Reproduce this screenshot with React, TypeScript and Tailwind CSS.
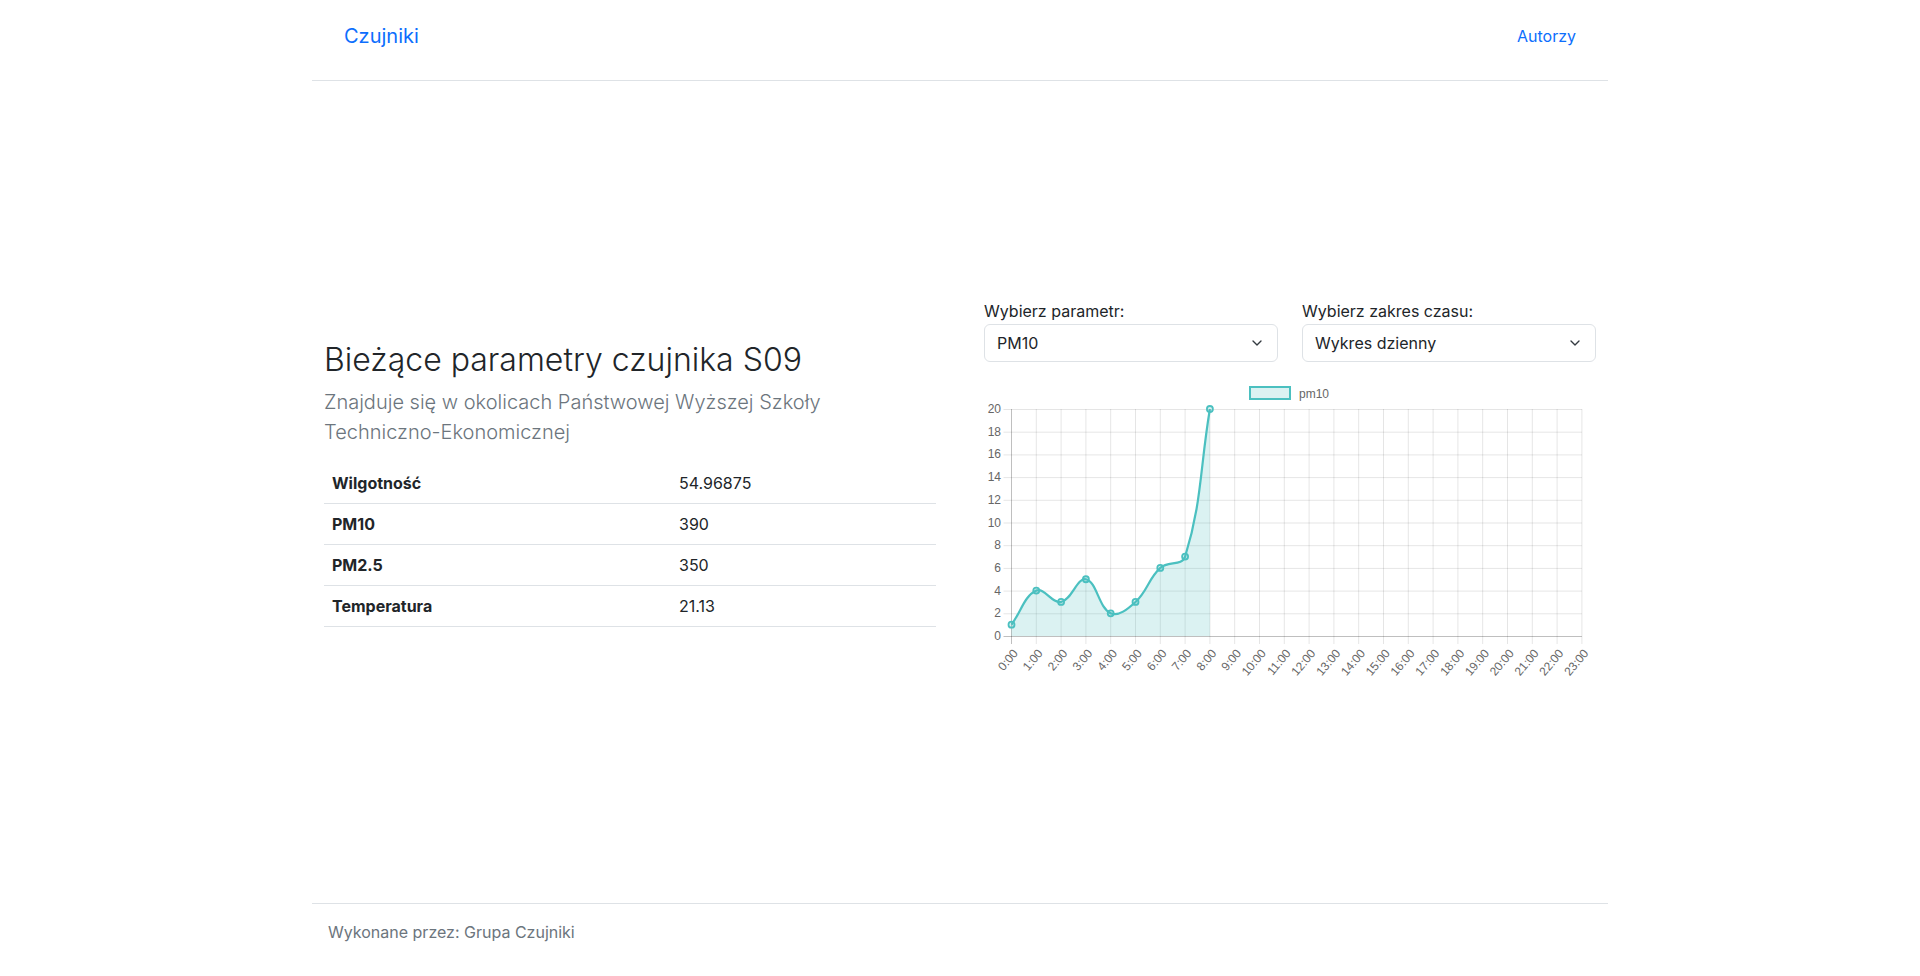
import { ChevronDown } from "lucide-react";

type Pt = { x: number; y: number };

const data = [1, 4, 3, 5, 2, 3, 6, 7, 20];
const hours = Array.from({ length: 24 }, (_, i) => `${i}:00`);

// chart geometry (px inside the svg)
const X0 = 27.5;
const STEP = 24.8;
const Y_TOP = 33;
const Y_BOT = 260;
const yv = (v: number) => Y_BOT - (v * (Y_BOT - Y_TOP)) / 20;
const xv = (i: number) => X0 + i * STEP;

// same control points as chart.js line tension 0.4
function splinePath(pts: Pt[], t = 0.4) {
  const cps = pts.map((cur, i) => {
    const prev = pts[i - 1] ?? cur;
    const next = pts[i + 1] ?? cur;
    const d01 = Math.hypot(cur.x - prev.x, cur.y - prev.y);
    const d12 = Math.hypot(next.x - cur.x, next.y - cur.y);
    let s01 = d01 / (d01 + d12);
    let s12 = d12 / (d01 + d12);
    if (isNaN(s01)) s01 = 0;
    if (isNaN(s12)) s12 = 0;
    const fa = t * s01;
    const fb = t * s12;
    return {
      prev: { x: cur.x - fa * (next.x - prev.x), y: cur.y - fa * (next.y - prev.y) },
      next: { x: cur.x + fb * (next.x - prev.x), y: cur.y + fb * (next.y - prev.y) },
    };
  });
  let d = `M${pts[0].x},${pts[0].y}`;
  for (let i = 1; i < pts.length; i++) {
    const a = cps[i - 1].next;
    const b = cps[i].prev;
    d += ` C${a.x},${a.y} ${b.x},${b.y} ${pts[i].x},${pts[i].y}`;
  }
  return d;
}

function Chart() {
  const pts = data.map((v, i) => ({ x: xv(i), y: yv(v) }));
  const line = splinePath(pts);
  const area = `${line} L${pts[pts.length - 1].x},${Y_BOT} L${pts[0].x},${Y_BOT} Z`;
  const xEnd = xv(23);

  return (
    <svg width={612} height={309} className="block overflow-visible font-['Liberation_Sans',Arial,sans-serif]">
      {/* legend */}
      <rect x={266} y={11} width={40} height={12} fill="rgba(75,192,192,0.2)" stroke="rgb(75,192,192)" strokeWidth={2} />
      <text x={315} y={17.5} fontSize={12} fill="#666" dominantBaseline="central">
        pm10
      </text>

      {/* horizontal grid + y ticks */}
      {Array.from({ length: 11 }, (_, k) => k * 2).map((v) => (
        <g key={v}>
          <line
            x1={X0 - 8}
            x2={xEnd}
            y1={yv(v) + 0.5}
            y2={yv(v) + 0.5}
            stroke={v === 0 ? "rgba(0,0,0,0.25)" : "rgba(0,0,0,0.1)"}
            strokeWidth={1}
          />
          <text x={17} y={yv(v)} fontSize={12} fill="#666" textAnchor="end" dominantBaseline="central">
            {v}
          </text>
        </g>
      ))}

      {/* vertical grid + x ticks */}
      {hours.map((h, i) => (
        <g key={h}>
          <line
            x1={xv(i)}
            x2={xv(i)}
            y1={Y_TOP}
            y2={Y_BOT + 8}
            stroke={i === 0 ? "rgba(0,0,0,0.25)" : "rgba(0,0,0,0.1)"}
            strokeWidth={1}
          />
          <text
            transform={`translate(${xv(i) + 4},${Y_BOT + 15}) rotate(-50)`}
            fontSize={12}
            fill="#666"
            textAnchor="end"
            dominantBaseline="central"
          >
            {h}
          </text>
        </g>
      ))}

      {/* data */}
      <path d={area} fill="rgba(75,192,192,0.2)" />
      <path d={line} fill="none" stroke="rgb(75,192,192)" strokeWidth={2.2} />
      {pts.map((p, i) => (
        <circle key={i} cx={p.x} cy={p.y} r={3} fill="rgba(75,192,192,0.2)" stroke="rgb(75,192,192)" strokeWidth={1.8} />
      ))}
    </svg>
  );
}

function Select({ label, value }: { label: string; value: string }) {
  return (
    <div>
      <div className="text-base leading-6">{label}</div>
      <div className="mt-px h-[38px] border border-[#dee2e6] rounded-md pl-3 pr-3 flex items-center justify-between bg-white">
        <span className="text-base leading-6">{value}</span>
        <ChevronDown size={16} strokeWidth={2} className="text-[#343a40]" />
      </div>
    </div>
  );
}

const rows = [
  ["Wilgotność", "54.96875"],
  ["PM10", "390"],
  ["PM2.5", "350"],
  ["Temperatura", "21.13"],
];

export default function App() {
  return (
    <div className="bg-white text-[#212529] font-['Inter',sans-serif]">
      <div className="mx-auto w-[1320px] px-3 h-screen flex flex-col">
        <header className="pt-4 pb-6 border-b border-[#dee2e6]">
          <div className="px-8 h-10 flex items-center justify-between">
            <a className="text-[20px] text-[#0d6efd]">Czujniki</a>
            <a className="text-base text-[#0d6efd]">Autorzy</a>
          </div>
        </header>

        <main className="flex-1 flex items-center">
          <div className="w-full px-3 grid grid-cols-2 gap-12 items-center">
            <div>
              <h2 className="text-[32px] font-light leading-[1.2] mb-2">Bieżące parametry czujnika S09</h2>
              <p className="text-[20px] font-light leading-[30px] text-[#6c757d] mb-4">
                Znajduje się w okolicach Państwowej Wyższej Szkoły Techniczno-Ekonomicznej
              </p>
              <table className="w-full mb-4 border-collapse">
                <tbody>
                  {rows.map(([k, v]) => (
                    <tr key={k} className="border-b border-[#dee2e6]">
                      <td className="w-[347px] p-2 font-bold leading-6">{k}</td>
                      <td className="p-2 leading-6">{v}</td>
                    </tr>
                  ))}
                </tbody>
              </table>
            </div>

            <div>
              <div className="grid grid-cols-2 gap-6">
                <Select label="Wybierz parametr:" value="PM10" />
                <Select label="Wybierz zakres czasu:" value="Wykres dzienny" />
              </div>
              <div className="mt-[14px]">
                <Chart />
              </div>
            </div>
          </div>
        </main>

        <footer className="border-t border-[#dee2e6] pt-4 pb-8 px-4">
          <p className="text-base leading-6 text-[#6c757d]">Wykonane przez: Grupa Czujniki</p>
        </footer>
      </div>
    </div>
  );
}
